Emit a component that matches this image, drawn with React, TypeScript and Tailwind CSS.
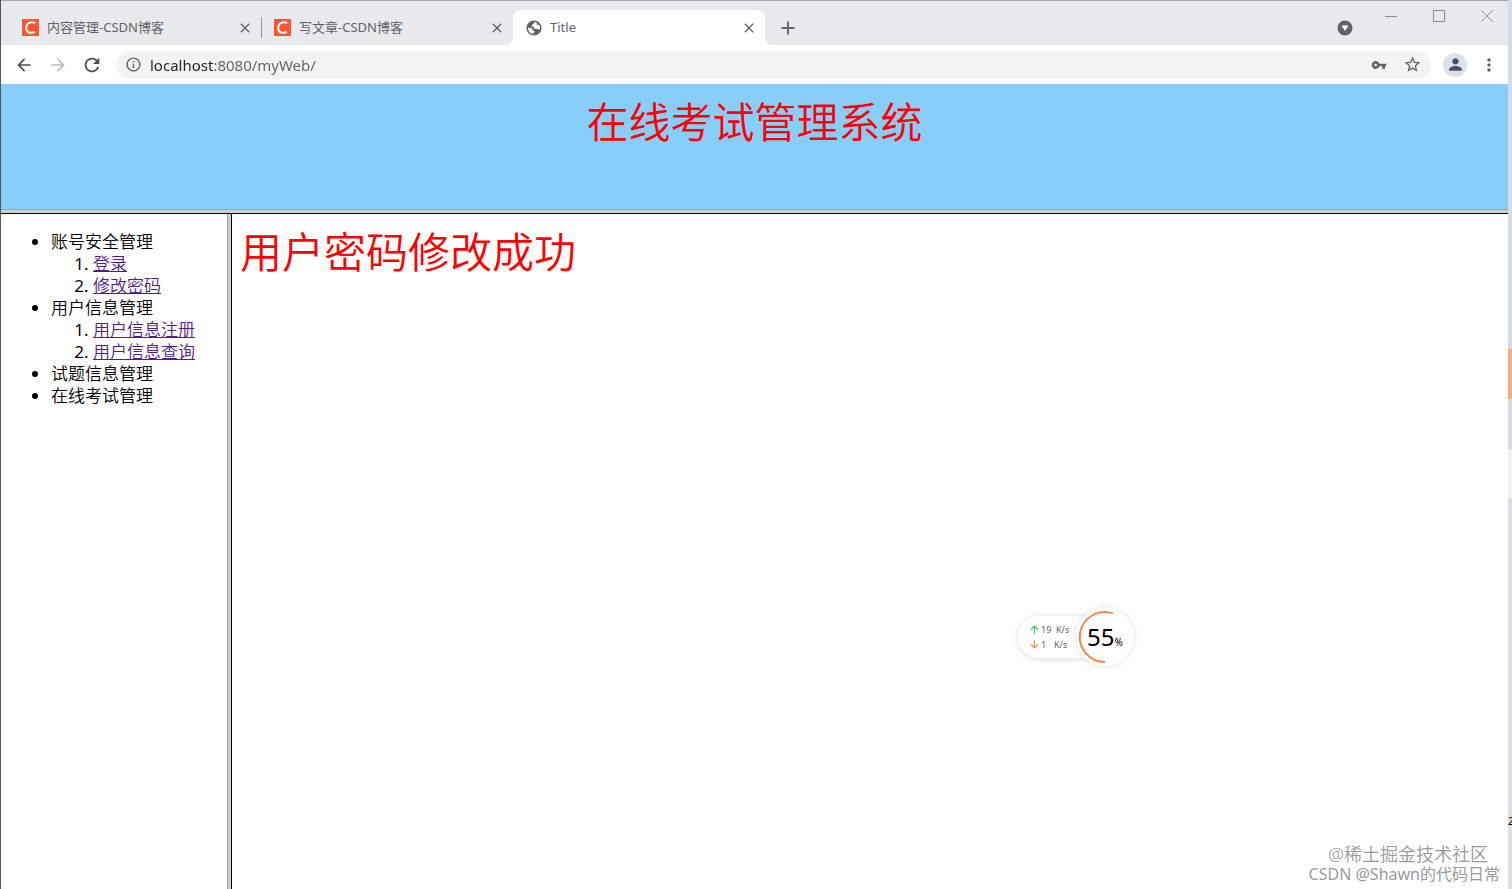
import React from 'react';
import {
  MdAdd,
  MdArrowBack,
  MdArrowForward,
  MdClose,
  MdInfoOutline,
  MdMoreVert,
  MdPerson,
  MdRefresh,
  MdStarOutline,
  MdVpnKey,
} from 'react-icons/md';

interface MenuGroup {
  title: string;
  items: string[];
}

const menu: MenuGroup[] = [
  { title: '账号安全管理', items: ['登录', '修改密码'] },
  { title: '用户信息管理', items: ['用户信息注册', '用户信息查询'] },
  { title: '试题信息管理', items: [] },
  { title: '在线考试管理', items: [] },
];

function CsdnIcon() {
  return (
    <svg viewBox="0 0 17 17" className="w-[17px] h-[17px] shrink-0" aria-hidden="true">
      <rect width="17" height="17" fill="#fc5531" />
      <path d="M13.2 4.2C11.6 3.3 9.9 3 8.2 3.5 5.8 4.2 4.3 6.3 4.2 8.9c-.1 3 1.8 4.8 4.7 4.8 1.4 0 2.8-.2 4-.8" fill="none" stroke="#fff" strokeWidth="2" />
    </svg>
  );
}

function GlobeIcon() {
  return (
    <svg viewBox="0 0 16 16" className="w-4 h-4 shrink-0" aria-hidden="true">
      <circle cx="8" cy="8" r="7.6" fill="#5f6368" />
      <path d="M8.6 2.1c-.9 1-.5 1.6-1.5 2.1-.9.4-1.7.6-1.4 1.6.2.9 1.4.6 2 1.2.6.7.2 1.7 1.2 1.9 1 .2 1.6-.4 2.4.1.8.4.9.9 2.5.4A6 6 0 0 0 12.9 4.6c-.8.5-1.5.4-1.9-.2-.4-.6.3-1.2-.3-1.7z" fill="#fff" />
      <path d="M2 7.9c1.3-.1 3.1-.1 4 .6.9.8.2 1.6 1.1 2.1.8.4 1.5.3 1.4 1.2-.1.9-1.2.8-1.4 2.1A6 6 0 0 1 2 7.9z" fill="#fff" />
    </svg>
  );
}

function TabCloseButton() {
  return (
    <button aria-label="关闭" className="p-1 text-[#5f6368]">
      <MdClose className="w-4 h-4" />
    </button>
  );
}

function Tab({ title }: { title: string }) {
  return (
    <div className="flex items-center w-[251px] h-[35px] pl-3 pr-1">
      <CsdnIcon />
      <span className="flex-1 ml-2 text-[13px] text-[#5f6368] truncate">{title}</span>
      <TabCloseButton />
    </div>
  );
}

function TabStrip() {
  return (
    <div className="flex items-end h-[45px] pl-[9px] bg-[#e8e9ec] border-t border-[#a5a6a9]">
      <Tab title="内容管理-CSDN博客" />
      <div className="w-px h-[21px] mb-[7px] bg-[#95979b]" />
      <Tab title="写文章-CSDN博客" />

      {/* Active tab */}
      <div className="relative flex items-center w-[252px] h-[35px] pl-[13px] pr-1 rounded-t-lg bg-white">
        <span className="absolute bottom-0 right-full w-2 h-2 bg-[radial-gradient(circle_at_0_0,transparent_8px,white_8px)]" />
        <span className="absolute bottom-0 left-full w-2 h-2 bg-[radial-gradient(circle_at_100%_0,transparent_8px,white_8px)]" />
        <GlobeIcon />
        <span className="flex-1 ml-2 text-[13px] text-[#5f6368]">Title</span>
        <TabCloseButton />
      </div>
      <button aria-label="新标签页" className="flex items-center h-[35px] ml-3 text-[#5f6368]">
        <MdAdd className="w-[22px] h-[22px]" />
      </button>

      <div className="flex ml-auto h-full">
        <button aria-label="搜索标签页" className="self-end flex items-center h-[35px] mr-8">
          <svg viewBox="0 0 16 16" className="w-4 h-4">
            <circle cx="8" cy="8" r="7.5" fill="#5f6368" />
            <path d="M4.5 5.5h7L8 11z" fill="#fff" />
          </svg>
        </button>
        <div className="flex items-start gap-9 pt-[9px] pr-[15px] text-[#8b8c8f]">
          <button aria-label="最小化">
            <svg viewBox="0 0 12 12" className="w-3 h-3" stroke="currentColor"><path d="M0 6.5h12" /></svg>
          </button>
          <button aria-label="最大化">
            <svg viewBox="0 0 12 12" className="w-3 h-3" stroke="currentColor" fill="none"><path d="M.5.5h11v11H.5z" /></svg>
          </button>
          <button aria-label="关闭窗口">
            <svg viewBox="0 0 12 12" className="w-3 h-3" stroke="currentColor"><path d="M.5.5l11 11M11.5.5l-11 11" /></svg>
          </button>
        </div>
      </div>
    </div>
  );
}

function Toolbar() {
  return (
    <div className="flex items-center h-[39px] pl-[13px] pr-[9px] bg-white text-[#5f6368]">
      <button aria-label="后退"><MdArrowBack className="w-5 h-5 text-[#4d5156]" /></button>
      <button aria-label="前进" className="ml-[14px]"><MdArrowForward className="w-5 h-5 text-[#b9bbbe]" /></button>
      <button aria-label="重新加载" className="ml-[13px]"><MdRefresh className="w-[22px] h-[22px] text-[#4d5156]" /></button>

      <div className="flex flex-1 items-center h-7 ml-[13px] pl-[9px] pr-[9px] rounded-full bg-[#f1f3f4]">
        <MdInfoOutline className="w-[17px] h-[17px] mr-2 shrink-0" />
        {/* Host is darker than the port and path */}
        <input
          aria-label="地址"
          defaultValue="localhost:8080/myWeb/"
          className="flex-1 min-w-0 text-[15px] leading-6 outline-none text-transparent bg-clip-text bg-[linear-gradient(to_right,#202124_63px,#5f6368_63px)]"
        />
        <button aria-label="密码"><MdVpnKey className="w-4 h-4" /></button>
        <button aria-label="收藏" className="ml-4"><MdStarOutline className="w-[19px] h-[19px]" /></button>
      </div>

      <button aria-label="用户" className="flex items-center justify-center w-6 h-6 ml-3 rounded-full bg-[#dee1e8]">
        <MdPerson className="w-[19px] h-[19px] text-[#4a5163]" />
      </button>
      <button aria-label="更多" className="ml-3"><MdMoreVert className="w-5 h-5" /></button>
    </div>
  );
}

function Sidebar() {
  return (
    <nav className="w-[226px] shrink-0 pt-[17px]">
      <ul className="list-disc pl-[50px] text-[17px] leading-[22px] font-[350] text-black">
        {menu.map((group) => (
          <li key={group.title}>
            {group.title}
            {group.items.length > 0 && (
              <ol className="list-decimal pl-[42px] marker:font-normal">
                {group.items.map((item) => (
                  <li key={item}>
                    <a href="#" className="text-[#551a8b] underline">{item}</a>
                  </li>
                ))}
              </ol>
            )}
          </li>
        ))}
      </ul>
    </nav>
  );
}

function SpeedWidget() {
  return (
    <div className="absolute top-[608px] right-[378px] flex items-center">
      <div className="flex flex-col justify-center h-[42px] w-[70px] -mr-3 pl-3 rounded-l-full bg-white shadow-[0_1px_6px_rgba(0,0,0,0.15)] text-[9px] leading-[15px] text-[#666]">
        <div className="flex items-center">
          <svg viewBox="0 0 9 9" className="w-[9px] h-[9px] mr-[2px]" fill="none" stroke="#3fc45a" strokeWidth="1.2"><path d="M4.5 8.5V1M1 4.5L4.5 1 8 4.5" /></svg>
          <span className="w-[15px]">19</span>
          <span>K/s</span>
        </div>
        <div className="flex items-center">
          <svg viewBox="0 0 9 9" className="w-[9px] h-[9px] mr-[2px]" fill="none" stroke="#f58a4b" strokeWidth="1.2"><path d="M4.5.5V8M1 4.5L4.5 8 8 4.5" /></svg>
          <span className="w-[13px]">1</span>
          <span>K/s</span>
        </div>
      </div>
      <div className="relative flex items-center justify-center w-[58px] h-[58px] rounded-full bg-white shadow-[0_0_6px_rgba(0,0,0,0.12)] text-black">
        <svg viewBox="0 0 58 58" className="absolute inset-0 w-full h-full" fill="none" stroke="#f58a4b" strokeWidth="2">
          <path d="M37 5.4A25 25 0 1 0 29 54" />
        </svg>
        <div className="flex items-baseline">
          <span className="text-[24px] leading-none">55</span>
          <span className="text-[10px] leading-none">%</span>
        </div>
      </div>
    </div>
  );
}

export default function App() {
  return (
    <div className="relative flex min-h-screen overflow-hidden font-['Noto_Sans','Noto_Sans_CJK_SC',sans-serif]">
      <div className="flex flex-1 min-w-0 flex-col border-l border-[#55565a] bg-white">
        <TabStrip />
        <Toolbar />

        <header className="h-[125px] pt-2 bg-[#87cefa] text-center">
          <h1 className="text-[42px] leading-[60px] font-[350] text-[#f00]">在线考试管理系统</h1>
        </header>
        <div className="h-[5px] border-t border-b border-t-[#a0a0a0] border-b-black bg-[#cfcfcf]" />

        <div className="flex flex-1">
          <Sidebar />
          <div className="w-[5px] border-l border-r border-l-[#a0a0a0] border-r-black bg-[#cfcfcf]" />
          <main className="flex-1 px-2 pt-2">
            <p className="text-[42px] leading-[60px] font-[350] text-[#f00]">用户密码修改成功</p>
          </main>
        </div>
      </div>

      {/* Edge of the window behind */}
      <div className="flex flex-col w-1 shrink-0 overflow-hidden bg-[#dfdfe1]">
        <div className="h-[349px] bg-[#d5dae6]" />
        <div className="h-[50px] bg-[#f8ae7c]" />
        <div className="h-[50px] bg-[#d7dae6]" />
        <div className="h-[49px] bg-[#f1f2f4]" />
        <div className="h-[314px] bg-[#dadce3]" />
        <span className="text-[10px] leading-[18px] text-black">2</span>
      </div>

      <SpeedWidget />

      <div className="absolute bottom-[5px] right-3 text-right text-[#9a9a9a] [text-shadow:1px_1px_1px_#fff]">
        <p className="pr-3 text-[18px] leading-[20px] font-[350]">@稀土掘金技术社区</p>
        <p className="text-[16px] leading-[20px]">CSDN @Shawn的代码日常</p>
      </div>
    </div>
  );
}
